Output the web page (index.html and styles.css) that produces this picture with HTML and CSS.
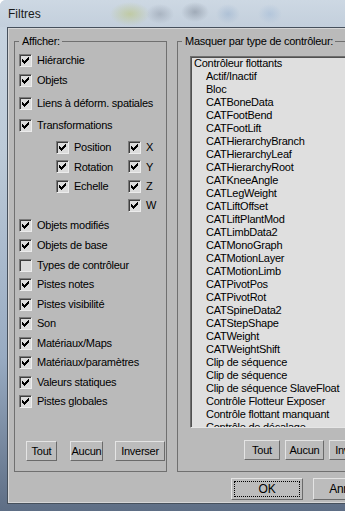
FILE: index.html
```html
<!DOCTYPE html>
<html lang="fr">
<head>
    <meta charset="UTF-8">
    <meta name="viewport" content="width=device-width, initial-scale=1.0">
    <title>Filtres</title>
    <link rel="stylesheet" href="styles.css">
</head>
<body>
    <svg class="defs" width="0" height="0">
        <symbol id="tick" viewBox="0 0 11 11">
            <path d="M8 2h1v1h-1zM7 3h2v1h-2zM2 4h1v1h-1zM6 4h3v1h-3zM2 5h2v1h-2zM5 5h3v1h-3zM2 6h5v1h-5zM3 7h3v1h-3zM4 8h1v1h-1z"/>
        </symbol>
    </svg>

    <div class="window">
        <div class="titlebar">
            <span class="title">Filtres</span>
        </div>

        <div class="client">
            <div class="panes">
                <fieldset class="group group-show">
                    <legend>Afficher:</legend>
                    <div class="check"><span class="box"><svg><use href="#tick"/></svg></span>Hiérarchie</div>
                    <div class="check"><span class="box"><svg><use href="#tick"/></svg></span>Objets</div>
                    <div class="check gap3"><span class="box"><svg><use href="#tick"/></svg></span>Liens à déform. spatiales</div>
                    <div class="check gap2"><span class="box"><svg><use href="#tick"/></svg></span>Transformations</div>

                    <div class="sub">
                        <div class="check"><span class="box"><svg><use href="#tick"/></svg></span>Position</div>
                        <div class="check"><span class="box"><svg><use href="#tick"/></svg></span>X</div>
                        <div class="check"><span class="box"><svg><use href="#tick"/></svg></span>Rotation</div>
                        <div class="check"><span class="box"><svg><use href="#tick"/></svg></span>Y</div>
                        <div class="check"><span class="box"><svg><use href="#tick"/></svg></span>Echelle</div>
                        <div class="check"><span class="box"><svg><use href="#tick"/></svg></span>Z</div>
                        <div></div>
                        <div class="check"><span class="box"><svg><use href="#tick"/></svg></span>W</div>
                    </div>

                    <div class="check"><span class="box"><svg><use href="#tick"/></svg></span>Objets modifiés</div>
                    <div class="check"><span class="box"><svg><use href="#tick"/></svg></span>Objets de base</div>
                    <div class="check"><span class="box off"></span>Types de contrôleur</div>
                    <div class="check tight"><span class="box"><svg><use href="#tick"/></svg></span>Pistes notes</div>
                    <div class="check"><span class="box"><svg><use href="#tick"/></svg></span>Pistes visibilité</div>
                    <div class="check tight"><span class="box"><svg><use href="#tick"/></svg></span>Son</div>
                    <div class="check"><span class="box"><svg><use href="#tick"/></svg></span>Matériaux/Maps</div>
                    <div class="check tight"><span class="box"><svg><use href="#tick"/></svg></span>Matériaux/paramètres</div>
                    <div class="check"><span class="box"><svg><use href="#tick"/></svg></span>Valeurs statiques</div>
                    <div class="check tight"><span class="box"><svg><use href="#tick"/></svg></span>Pistes globales</div>

                    <div class="buttons buttons-show">
                        <button class="btn w-tout">Tout</button>
                        <button class="btn w-aucun">Aucun</button>
                        <button class="btn w-inverser">Inverser</button>
                    </div>
                </fieldset>

                <fieldset class="group group-hide">
                    <legend>Masquer par type de contrôleur:</legend>
                    <div class="listbox">
                        <div class="item">Contrôleur flottants</div>
                        <div class="item child">Actif/Inactif</div>
                        <div class="item child">Bloc</div>
                        <div class="item child">CATBoneData</div>
                        <div class="item child">CATFootBend</div>
                        <div class="item child">CATFootLift</div>
                        <div class="item child">CATHierarchyBranch</div>
                        <div class="item child">CATHierarchyLeaf</div>
                        <div class="item child">CATHierarchyRoot</div>
                        <div class="item child">CATKneeAngle</div>
                        <div class="item child">CATLegWeight</div>
                        <div class="item child">CATLiftOffset</div>
                        <div class="item child">CATLiftPlantMod</div>
                        <div class="item child">CATLimbData2</div>
                        <div class="item child">CATMonoGraph</div>
                        <div class="item child">CATMotionLayer</div>
                        <div class="item child">CATMotionLimb</div>
                        <div class="item child">CATPivotPos</div>
                        <div class="item child">CATPivotRot</div>
                        <div class="item child">CATSpineData2</div>
                        <div class="item child">CATStepShape</div>
                        <div class="item child">CATWeight</div>
                        <div class="item child">CATWeightShift</div>
                        <div class="item child">Clip de séquence</div>
                        <div class="item child">Clip de séquence</div>
                        <div class="item child">Clip de séquence SlaveFloat</div>
                        <div class="item child">Contrôle Flotteur Exposer</div>
                        <div class="item child">Contrôle flottant manquant</div>
                        <div class="item child">Contrôle de décalage</div>
                    </div>

                    <div class="buttons buttons-hide">
                        <button class="btn w-tout2">Tout</button>
                        <button class="btn w-aucun2">Aucun</button>
                        <button class="btn w-inverser">Inverser</button>
                    </div>
                </fieldset>
            </div>

            <div class="footer">
                <button class="btn dlg default">OK</button>
                <button class="btn dlg">Annuler</button>
            </div>
        </div>
    </div>
</body>
</html>
```

FILE: styles.css
```css
body {
    margin: 0;
    font-family: 'Liberation Sans', Arial, sans-serif;
    font-size: 11px;
    letter-spacing: -0.25px;
    color: #000;
}
.defs {
    position: absolute;
    width: 0;
    height: 0;
}
.window {
    width: 345px;
    height: 511px;
    overflow: hidden;
    border-top-left-radius: 6px;
    background: linear-gradient(to bottom, #c9d5e1 0, #bccad8 30%, #98abc2 70%, #5e6e85 100%);
}
.titlebar {
    height: 27px;
    box-sizing: border-box;
    padding: 7px 0 0 8px;
    background:
        radial-gradient(ellipse 20px 12px at 130px 14px, rgba(190, 200, 150, 0.8), transparent),
        radial-gradient(ellipse 14px 10px at 160px 14px, rgba(140, 150, 165, 0.5), transparent),
        radial-gradient(ellipse 14px 10px at 195px 12px, rgba(120, 130, 145, 0.5), transparent),
        radial-gradient(ellipse 12px 10px at 228px 14px, rgba(150, 175, 205, 0.5), transparent),
        radial-gradient(ellipse 12px 10px at 270px 14px, rgba(160, 185, 215, 0.5), transparent),
        linear-gradient(to bottom, #cdd8e3, #c3cfdc);
}
.title {
    font-size: 12px;
    letter-spacing: 0;
    color: #1a1a1a;
}
.client {
    margin-left: 7px;
    height: 477px;
    box-sizing: border-box;
    border-top: 1px solid #46505c;
    border-left: 1px solid #46505c;
    border-bottom: 1px solid #46505c;
    background-color: #bababa;
    box-shadow: inset 1px 1px 0 #d6d6d6, inset 0 -1px 0 #d6d6d6;
}
.panes {
    display: flex;
    gap: 10px;
    padding: 7px 0 0 6px;
}
.group {
    margin: 0;
    min-width: 0;
    padding: 2px 0 10px 4px;
    border: 1px solid #707070;
    box-sizing: border-box;
}
.group legend {
    padding: 0 2px 0 3px;
    line-height: 13px;
}
.group-show {
    width: 153px;
    flex: none;
}
.group-hide {
    width: 210px;
    flex: none;
}
.check {
    display: flex;
    align-items: center;
    height: 20px;
    white-space: nowrap;
}
.gap3 {
    margin-top: 3px;
}
.gap2 {
    margin-top: 2px;
}
.tight {
    margin-top: -1px;
}
.sub {
    display: grid;
    grid-template-columns: 72px auto;
    grid-template-rows: 20px 19px 20px 18px;
    margin: 2px 0 1px 37px;
}
.sub .check {
    height: auto;
}
.box {
    width: 13px;
    height: 13px;
    box-sizing: border-box;
    flex: none;
    margin-right: 5px;
    border: 1px solid;
    border-color: #7a7a7a #ececec #ececec #7a7a7a;
    box-shadow: inset 1px 1px 0 #3e3e3e;
    background-color: #dcdcdc;
}
.box svg {
    display: block;
    width: 11px;
    height: 11px;
    fill: #000;
}
.buttons {
    display: flex;
    margin-top: 30px;
}
.buttons-show {
    padding-left: 7px;
}
.buttons-hide {
    margin-top: 12px;
    padding-left: 62px;
}
.btn {
    height: 20px;
    padding: 0;
    margin-right: 12px;
    font-family: inherit;
    font-size: 11px;
    letter-spacing: inherit;
    color: #000;
    background-color: #bcbcbc;
    border: 1px solid;
    border-color: #e4e4e4 #6a6a6a #6a6a6a #e4e4e4;
    flex: none;
}
.w-tout {
    width: 31px;
    margin-right: 13px;
}
.w-aucun {
    width: 33px;
}
.w-inverser {
    width: 50px;
}
.w-tout2 {
    width: 36px;
    margin-right: 5px;
}
.w-aucun2 {
    width: 39px;
    margin-right: 5px;
}
.listbox {
    width: 200px;
    height: 372px;
    margin: 6px 0 0 8px;
    box-sizing: border-box;
    overflow: hidden;
    border: 1px solid;
    border-color: #6e6e6e #e6e6e6 #e6e6e6 #6e6e6e;
    box-shadow: inset 1px 1px 0 #505050;
    background-color: #dfdfdf;
    padding: 0 0 0 3px;
}
.item {
    line-height: 13px;
    white-space: nowrap;
}
.child {
    padding-left: 12px;
}
.footer {
    display: flex;
    gap: 10px;
    padding: 6px 0 0 223px;
}
.dlg {
    width: 72px;
    height: 22px;
    margin: 0;
    font-size: 12px;
}
.default {
    outline: 1px dotted #000;
    outline-offset: -4px;
}
```
